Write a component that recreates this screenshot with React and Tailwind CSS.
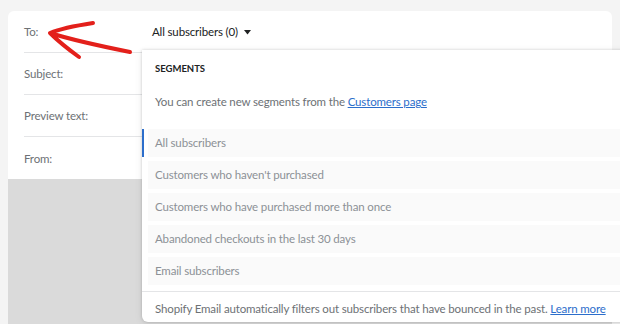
import React from 'react';

const segments = [
  'All subscribers',
  "Customers who haven't purchased",
  'Customers who have purchased more than once',
  'Abandoned checkouts in the last 30 days',
  'Email subscribers',
];

const fields = ['To:', 'Subject:', 'Preview text:', 'From:'];

const App = () => {
  return (
    <div className="w-[620px] h-[324px] bg-[#f4f4f4] relative overflow-hidden font-['Lato',sans-serif] tracking-[-0.15px]">
      <div className="pt-[11px] px-[8px] h-full flex flex-col">
        {/* --- Card --- */}
        <div className="bg-white rounded-t-[6px] flex-grow flex flex-col overflow-hidden">
          <div className="px-4">
            {fields.map((label, i) => (
              <div
                key={label}
                className={`h-[42px] pt-[1px] flex items-center ${i < fields.length - 1 ? 'border-b border-[#e4e5e7]' : ''}`}
              >
                <span className="w-[128px] text-[11.5px] text-[#6d7175]">{label}</span>
                {i === 0 && (
                  <span className="flex items-center gap-[6px] text-[11.5px] text-[#202223]">
                    All subscribers (0)
                    <svg width="7" height="5" viewBox="0 0 7 5">
                      <path d="M0 0h7L3.5 4.5z" fill="#202223" />
                    </svg>
                  </span>
                )}
              </div>
            ))}
          </div>
          <div className="flex-grow bg-[#dadada]" />
        </div>
      </div>

      {/* --- Red arrow annotation --- */}
      <svg className="absolute left-0 top-0 pointer-events-none" width="160" height="70" viewBox="0 0 160 70">
        <path
          d="M93 23 C80 25 62 28 50 33 C66 38 100 46 130 52 M50 33 C58 41 68 49 79 57"
          stroke="#e3201b"
          strokeWidth="4"
          fill="none"
          strokeLinecap="round"
          strokeLinejoin="round"
        />
      </svg>

      {/* --- Segments dropdown --- */}
      <div className="absolute left-[142px] top-[50px] right-[-12px] h-[272px] bg-white rounded-bl-[6px] shadow-[0_0_3px_rgba(0,0,0,0.18),0_2px_8px_rgba(0,0,0,0.08)] flex flex-col">
        <div className="px-[13px] pt-[12px] text-[9.5px] font-bold text-[#202223] tracking-normal">SEGMENTS</div>
        <div className="px-[13px] pt-[17px] text-[11.5px] text-[#6d7175]">
          You can create new segments from the{' '}
          <span className="text-[#2c6ecb] underline">Customers page</span>
        </div>
        <div className="mt-[18px] flex flex-col gap-[4px]">
          {segments.map((s, i) => (
            <div key={s} className="relative h-[28px] ml-[6px] bg-[#fafafa] flex items-center pl-[7px] text-[11.5px] text-[#8c9196]">
              {i === 0 && <div className="absolute left-[-6px] top-0 bottom-0 w-[2px] bg-[#2c6ecb]" />}
              {s}
            </div>
          ))}
        </div>
        <div className="mt-[6px] border-t border-[#e4e5e7] px-[13px] pt-[8px] text-[11.5px] text-[#6d7175] whitespace-nowrap">
          Shopify Email automatically filters out subscribers that have bounced in the past.{' '}
          <span className="text-[#2c6ecb] underline">Learn more</span>
        </div>
      </div>
    </div>
  );
};

export default App;
